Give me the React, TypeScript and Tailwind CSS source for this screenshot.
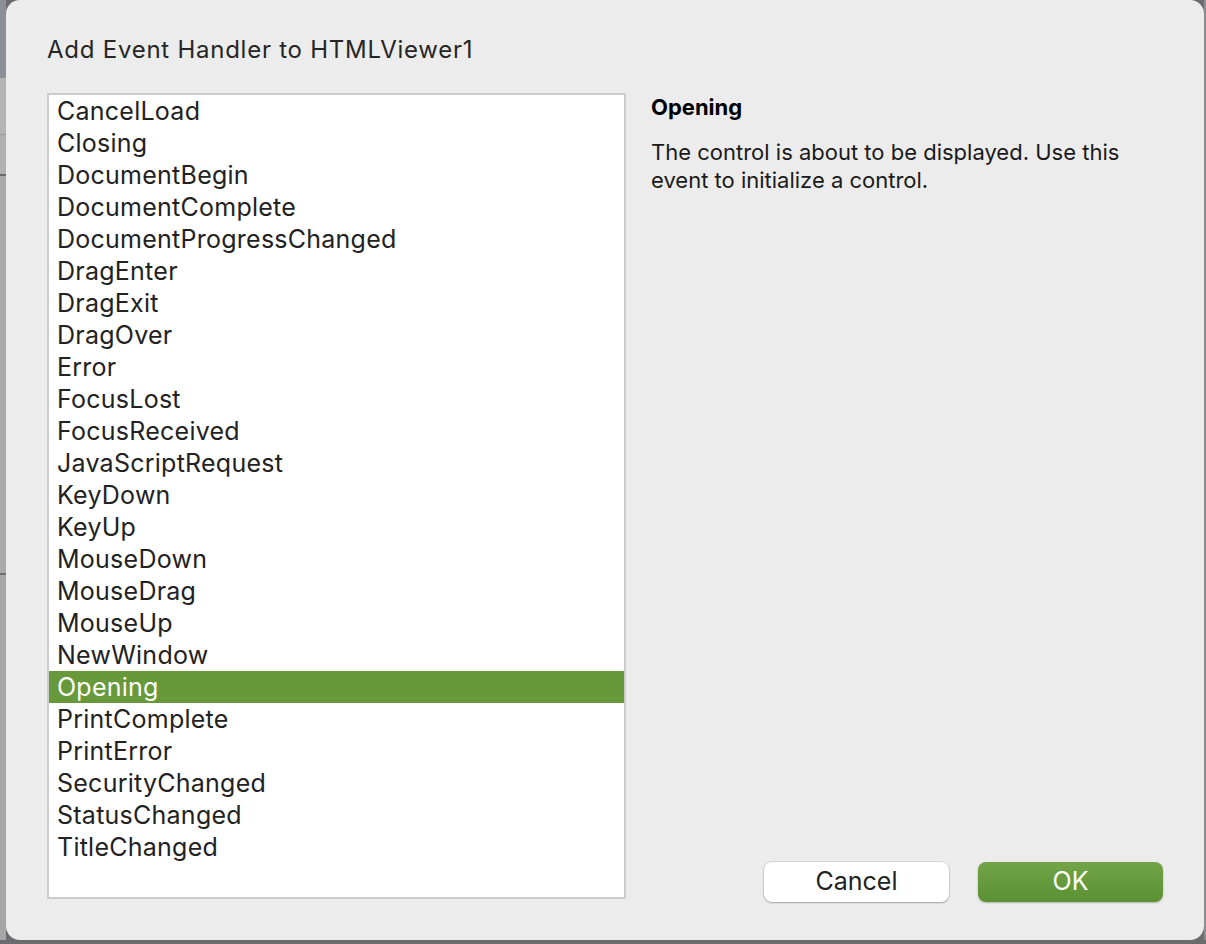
import React from "react";

const events = [
  "CancelLoad",
  "Closing",
  "DocumentBegin",
  "DocumentComplete",
  "DocumentProgressChanged",
  "DragEnter",
  "DragExit",
  "DragOver",
  "Error",
  "FocusLost",
  "FocusReceived",
  "JavaScriptRequest",
  "KeyDown",
  "KeyUp",
  "MouseDown",
  "MouseDrag",
  "MouseUp",
  "NewWindow",
  "Opening",
  "PrintComplete",
  "PrintError",
  "SecurityChanged",
  "StatusChanged",
  "TitleChanged",
];

const App = () => {
  const selected = "Opening";

  return (
    <div
      className="flex h-[944px] w-[1206px] overflow-hidden bg-[#6c6c6e] text-[#222]"
      style={{ fontFamily: "Inter, 'Noto Sans', sans-serif" }}
    >
      {/* backdrop strip on the left */}
      <div className="flex h-[940px] w-[6px] flex-col">
        <div className="h-[78px] bg-[#8b9097]" />
        <div className="h-[56px] bg-[#b4b4b4]" />
        <div className="h-[1px] bg-[#9a9a9a]" />
        <div className="h-[39px] bg-[#b0b0b0]" />
        <div className="h-[2px] bg-[#6a6a6a]" />
        <div className="h-[397px] bg-[#a9a9a9]" />
        <div className="h-[2px] bg-[#707070]" />
        <div className="flex-1 bg-[#a6a6a6]" />
      </div>

      <div className="flex h-[940px] w-[1198px] flex-col rounded-[14px] bg-[#ececec] pl-[41px] pr-[40px]">
        <div className="mt-[35px] h-[30px] text-[24px] leading-[30px] tracking-[0.75px] text-[#262626]">
          Add Event Handler to HTMLViewer1
        </div>

        <div className="mt-[28px] flex">
          <div className="h-[806px] w-[579px] border-2 border-[#cdcdcd] bg-white">
            {events.map((name) =>
              name === selected ? (
                <div
                  key={name}
                  className="h-[32px] bg-[#67983a] pl-[8px] text-[25px] leading-[32px] tracking-[0.25px] text-white"
                >
                  {name}
                </div>
              ) : (
                <div
                  key={name}
                  className="h-[32px] pl-[8px] text-[25px] leading-[32px] tracking-[0.25px] text-[#222]"
                >
                  {name}
                </div>
              )
            )}
          </div>

          <div className="ml-[25px] flex flex-1 flex-col">
            <div className="text-[22px] font-bold leading-[28px] text-black">
              {selected}
            </div>
            <p className="mt-[17px] w-[500px] text-[22px] leading-[28px] text-[#1a1a1a]">
              The control is about to be displayed. Use this event to initialize
              a control.
            </p>

            <div className="mt-auto mb-[-3px] flex justify-end gap-[29px] pr-[1px]">
              <button className="h-[40px] w-[185px] rounded-[8px] bg-white text-[25px] text-[#222] shadow-[0_0_0_1px_rgba(0,0,0,0.08),0_1px_2px_rgba(0,0,0,0.25)]">
                Cancel
              </button>
              <button className="h-[40px] w-[185px] rounded-[8px] bg-gradient-to-b from-[#71a547] to-[#5b9133] text-[25px] text-white shadow-[0_1px_2px_rgba(0,0,0,0.25)]">
                OK
              </button>
            </div>
          </div>
        </div>
      </div>

      <div className="h-[940px] w-[2px] bg-[#8a8e94]" />
    </div>
  );
};

export default App;
